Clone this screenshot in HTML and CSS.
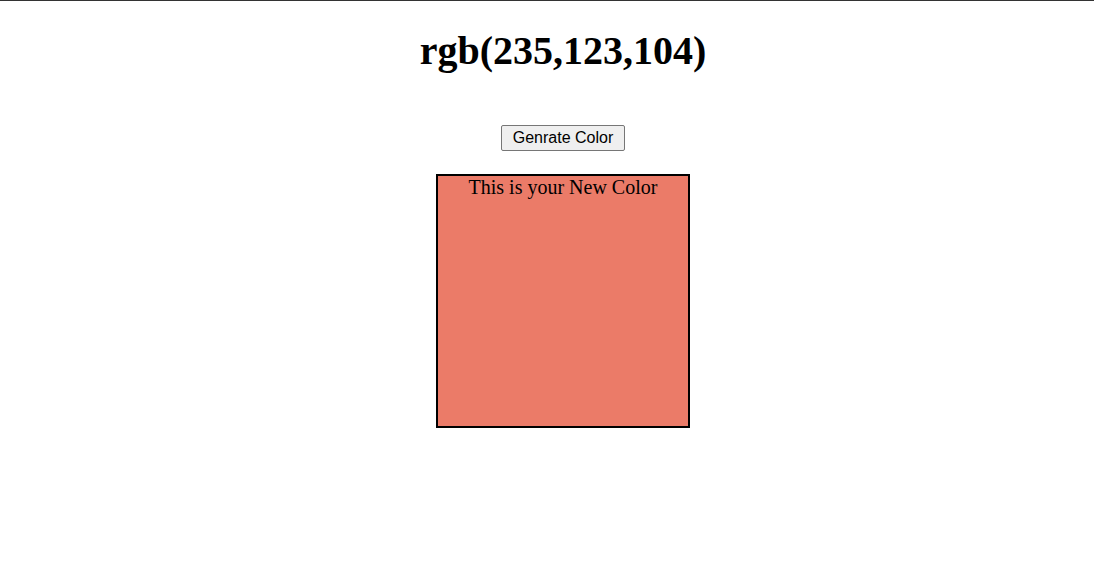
FILE: index.html
```html
<!DOCTYPE html>
<html>
<head>
<meta charset="utf-8">
<link rel="stylesheet" href="styles.css">
</head>
<body>
<div class="topline"></div>
<main class="page">
  <h1 class="title">rgb(235,123,104)</h1>
  <button class="gen">Genrate Color</button>
  <div class="swatch">This is your New Color</div>
</main>
</body>
</html>
```
FILE: styles.css
```css
html, body {
  margin: 0;
  padding: 0;
  background: #fff;
}
.topline {
  height: 1px;
  background: #333;
}
.page {
  padding-left: 32px;
  display: flex;
  flex-direction: column;
  align-items: center;
  font-family: "Liberation Serif", serif;
}
.title {
  font-family: "Liberation Serif", serif;
  font-size: 40px;
  font-weight: bold;
  margin: 27px 0 0;
  line-height: 1.15;
}
.gen {
  margin-top: 51px;
  font-family: "Liberation Sans", Arial, sans-serif;
  font-size: 16px;
  padding: 3px 11px;
  background: #efefef;
  border: 1px solid #767676;
  border-radius: 2px;
  color: #000;
}
.swatch {
  margin-top: 23px;
  width: 250px;
  height: 250px;
  border: 2px solid #000;
  background: rgb(235,123,104);
  text-align: center;
  font-size: 20px;
}
```
